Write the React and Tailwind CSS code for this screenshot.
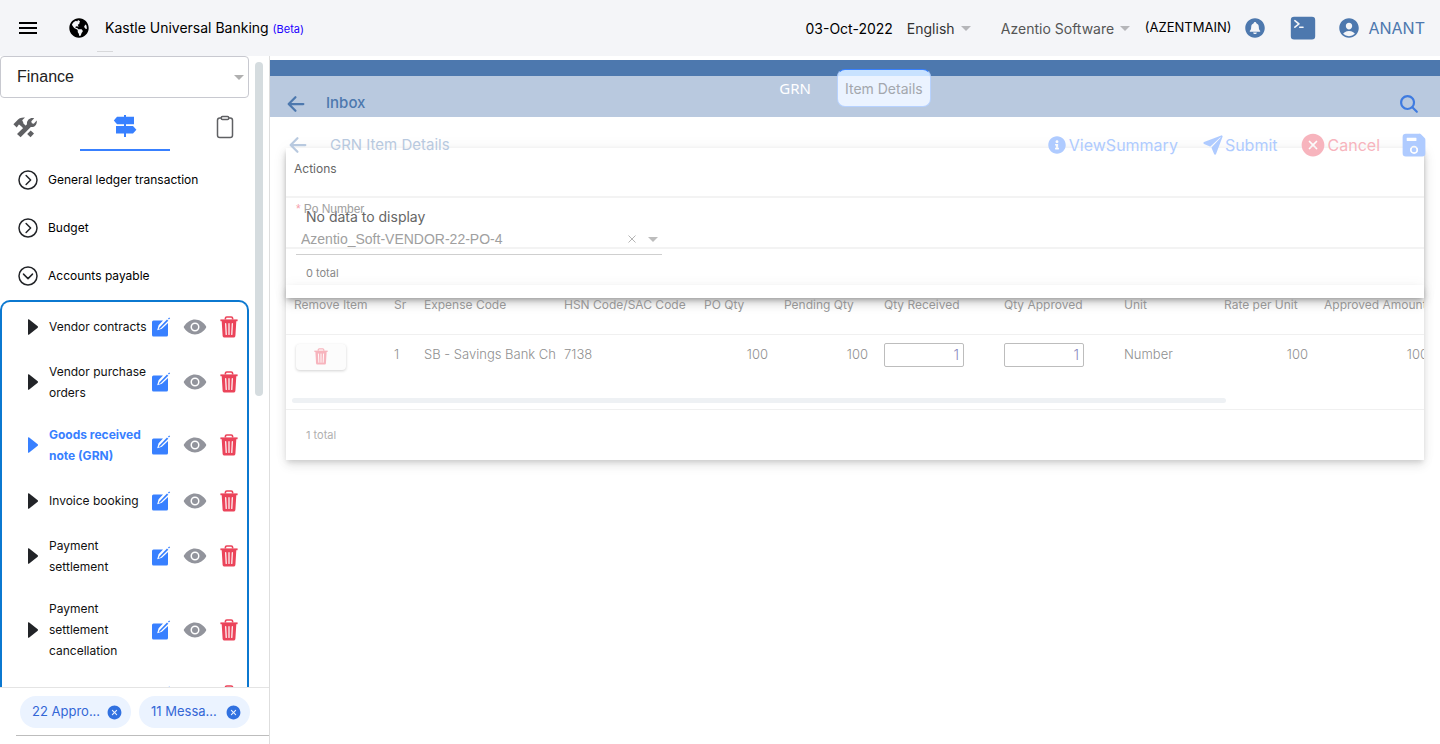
import { FaGlobeAmericas, FaInfoCircle } from 'react-icons/fa';
import { MdMenu } from 'react-icons/md';
import {
  IoArrowBack,
  IoChevronDownCircleOutline,
  IoChevronForwardCircleOutline,
  IoClipboardOutline,
  IoCloseCircle,
  IoEye,
  IoNotificationsCircle,
  IoPaperPlane,
  IoPersonCircle,
  IoSave,
  IoSearch,
  IoTerminal,
} from 'react-icons/io5';

const menuItems = [
  { label: 'Vendor contracts' },
  { label: 'Vendor purchase orders' },
  { label: 'Goods received note (GRN)', active: true },
  { label: 'Invoice booking' },
  { label: 'Payment settlement' },
  { label: 'Payment settlement cancellation' },
  { label: '' },
];

function Caret({ className }) {
  return (
    <svg viewBox="0 0 10 5" className={`pointer-events-none h-[5px] w-[10px] shrink-0 ${className}`} aria-hidden="true">
      <path d="M0 0h10L5 5z" fill="currentColor" />
    </svg>
  );
}

function ToolsIcon() {
  return (
    <svg viewBox="0 0 24 21" className="h-[21px] w-6" aria-hidden="true">
      <path d="M.4 7.200 3.600 3.900C5.500 1.500 8.500.3 12 .6L9.200 3.200l1.200 2.600L7.800 8.500 5.900 7.500 3.700 10.400z" fill="currentColor" />
      <path d="M17.700 13.400l3.300 3.200-3.500 3.600-3.300-3.300z" fill="currentColor" />
      <path d="M8.300 6.800l3.400 3.400" stroke="currentColor" strokeWidth="3.600" />
      <path
        d="M21.200 1.200 18.300 4.200l.5 2.100 2 .4 2.900-3.100c.7 3.600-2.100 7.200-5.900 6.400L7.600 20.200 4 16.900 14 7.300C13.300 3.200 17.200-.2 21.200 1.200z"
        fill="currentColor"
      />
    </svg>
  );
}

function SignpostIcon() {
  return (
    <svg viewBox="0 0 24 22" className="h-[22px] w-6" fill="currentColor" aria-hidden="true">
      <path d="M11 0h2v22h-2z" />
      <path d="M4 1.700h17v7.600H4L.8 5.500z" />
      <path d="M3 11h17l3.400 3.800L20 18.500H3z" />
    </svg>
  );
}

function EditIcon() {
  return (
    <svg viewBox="0 0 20 20" className="h-5 w-5" aria-hidden="true">
      <path
        d="M2.500 3.500H12L7.600 8.300l-1.400 4.900 4.700-1.400L17 6v12a1.500 1.500 0 0 1-1.500 1.500h-13A1.500 1.500 0 0 1 1 18V5a1.500 1.500 0 0 1 1.500-1.500z"
        fill="#3880ff"
      />
      <path d="M8.300 10.400 16 2.500l1.300 1.300-7.900 7.700-1.600.4z" fill="#3880ff" />
      <path d="m17 1.600 1.200-1.200.9.9-1.200 1.300z" fill="#3880ff" />
    </svg>
  );
}

function TrashIcon({ className }) {
  return (
    <svg viewBox="0 0 18 22" className={className} aria-hidden="true">
      <path d="M5.400 3.600V2.300C5.400 1.400 6 1 6.800 1h4.400c.8 0 1.400.4 1.400 1.300v1.300" fill="none" stroke="currentColor" strokeWidth="1.600" />
      <path d="M.4 3.400h17.200v1.800H.4z" fill="currentColor" />
      <path d="M1.700 5h14.600l-.9 14.700c-.1 1.100-.8 1.800-1.900 1.800h-9c-1.100 0-1.800-.7-1.900-1.800z" fill="currentColor" />
      <path d="M5.700 7.700l.5 10.800M9 7.700v10.800M12.300 7.700l-.5 10.800" stroke="#fff" strokeWidth="1.200" strokeLinecap="round" />
    </svg>
  );
}

function TopBar() {
  return (
    <header className="relative flex h-14 shrink-0 items-center bg-[#f4f5f8] pl-4 pr-[15px] text-black">
      <button aria-label="Menu" className="text-2xl">
        <MdMenu />
      </button>
      <FaGlobeAmericas className="ml-[29px] text-xl" />
      <h1 className="ml-4 text-[14px] leading-5">
        Kastle Universal Banking <span className="text-[11px] text-[#1a00ff]">(Beta)</span>
      </h1>
      <span className="absolute left-[97px] top-[51px] h-px w-4 bg-[#d7d8da]" />
      <div className="ml-auto flex items-center text-[14px]">
        <time>03-Oct-2022</time>
        <label className="ml-[14px] flex items-center text-[#333]">
          <select aria-label="Language" className="w-[54px] appearance-none bg-transparent outline-none">
            <option>English</option>
          </select>
          <Caret className="text-[#b5b6b9]" />
        </label>
        <label className="ml-[30px] flex items-center text-[#555]">
          <select aria-label="Company" className="w-[119px] appearance-none bg-transparent outline-none">
            <option>Azentio Software</option>
          </select>
          <Caret className="text-[#b5b6b9]" />
        </label>
        <span className="ml-[15px] text-[13px]">(AZENTMAIN)</span>
        <button aria-label="Notifications" className="ml-3 text-2xl text-[#4d78ae]">
          <IoNotificationsCircle />
        </button>
        <button aria-label="Console" className="ml-[23px] text-[26px] text-[#4d78ae]">
          <IoTerminal />
        </button>
        <button className="ml-[21px] flex items-center gap-[7px] text-[16px] text-[#4d78ae]">
          <IoPersonCircle className="text-2xl" />
          ANANT
        </button>
      </div>
    </header>
  );
}

function Section({ label, open }) {
  return (
    <button className="flex h-12 w-full items-center gap-2 pl-4 text-left text-[12px] text-black">
      {open ? (
        <IoChevronDownCircleOutline className="text-2xl text-[#222428]" />
      ) : (
        <IoChevronForwardCircleOutline className="text-2xl text-[#222428]" />
      )}
      {label}
    </button>
  );
}

function MenuRow({ label, active }) {
  return (
    <li className="flex min-h-12 items-center pb-[10px] pl-[26px] pt-[11px]">
      <svg viewBox="0 0 10 16" className={active ? 'h-4 w-[10px] text-[#3880ff]' : 'h-4 w-[10px] text-[#222428]'} aria-hidden="true">
        <path d="M0 .8v14.400c0 .6.7.7 1.200.3L9.700 8.700c.4-.4.4-1 0-1.400L1.200.5C.700.1 0 .2 0 .8z" fill="currentColor" />
      </svg>
      <a
        href="#"
        className={
          active
            ? 'ml-[11px] w-[102px] text-[12px] font-bold leading-[21px] text-[#3880ff]'
            : 'ml-[11px] w-[102px] text-[12px] leading-[21px] text-[#111]'
        }
      >
        {label}
      </a>
      <button aria-label="Edit">
        <EditIcon />
      </button>
      <button aria-label="View" className="ml-3 text-2xl text-[#92949c]">
        <IoEye />
      </button>
      <button aria-label="Delete" className="ml-[13px] text-[#eb445a]">
        <TrashIcon className="h-[22px] w-[18px]" />
      </button>
    </li>
  );
}

function Chip({ label }) {
  return (
    <span className="flex h-8 w-[111px] items-center justify-between rounded-full bg-[#ebf3ff] pl-3 pr-2 text-[13px] text-[#3367d6]">
      {label}
      <button aria-label="Dismiss" className="text-[17px] text-[#3171e0]">
        <IoCloseCircle />
      </button>
    </span>
  );
}

function Sidebar() {
  return (
    <aside className="flex w-[270px] shrink-0 flex-col border-r border-[#dedede]">
      <div className="flex min-h-0 flex-1 overflow-hidden">
        <div className="w-[249px]">
          <label className="flex h-[42px] items-center rounded border border-[#c8c9d0] pl-4 pr-1">
            <select
              aria-label="Module"
              className="flex-1 appearance-none bg-transparent font-['Liberation_Sans',sans-serif] text-[16px] text-[#222] outline-none"
            >
              <option>Finance</option>
            </select>
            <Caret className="text-[#b0b0b0]" />
          </label>
          <div className="flex h-[53px] overflow-hidden">
            <button aria-label="Tools" className="flex w-20 items-center pb-[3px] pl-[13px] pt-2 text-[#5f6063]">
              <ToolsIcon />
            </button>
            <button
              aria-label="Navigation"
              className="flex w-[90px] items-center justify-center border-b-2 border-[#3880ff] pt-[9px] text-[#3880ff]"
            >
              <span className="pb-1">
                <SignpostIcon />
              </span>
            </button>
            <button aria-label="Clipboard" className="flex flex-1 items-center pb-[3px] pl-[43px] pt-2 text-2xl text-[#5f6063]">
              <IoClipboardOutline />
            </button>
          </div>
          <nav className="pt-[5px]">
            <Section label="General ledger transaction" />
            <Section label="Budget" />
            <Section label="Accounts payable" open />
            <ul className="rounded-t-[10px] border-2 border-b-0 border-[#0b78d0] pb-12">
              {menuItems.map((item) => (
                <MenuRow key={item.label} {...item} />
              ))}
            </ul>
          </nav>
        </div>
        <div className="ml-[6px] mt-[6px] h-[334px] w-2 rounded bg-[#d5dcdf]" />
      </div>
      <div className="h-[57px] shrink-0 border-t border-[#e4e4e4] pt-2">
        <div className="flex gap-2 pl-5">
          <Chip label="22 Appro..." />
          <Chip label="11 Messa..." />
        </div>
        <div className="ml-4 mt-[7px] border-t border-[#bdbdbd]" />
      </div>
    </aside>
  );
}

function InboxLayer() {
  return (
    <div className="col-start-1 row-start-1 px-4 pt-[31px]">
      <section className="h-[150px] bg-white text-[#666] shadow-[0_3px_5px_-1px_rgba(0,0,0,0.28),0_6px_10px_0_rgba(0,0,0,0.13),0_1px_16px_0_rgba(0,0,0,0.05)]">
        <h3 className="h-[50px] border-b-2 border-[#f3f3f3] pl-2 pt-3 text-[12px] leading-[18px]">Actions</h3>
        <p className="h-[51px] border-b-2 border-[#f3f3f3] pl-5 pt-2 text-[14px] leading-[22px]">No data to display</p>
        <p className="pl-5 pt-[14px] text-[11px] leading-5 text-[#888]">0 total</p>
      </section>
    </div>
  );
}

function QtyInput({ label }) {
  return (
    <input
      aria-label={label}
      defaultValue="1"
      className="block h-6 w-20 rounded-xs border border-[#bdbdbd] bg-white px-1 text-right text-[14px] font-light text-[#8a8ac0] outline-none"
    />
  );
}

const columns = [
  { label: 'Remove Item', width: 'w-[100px]' },
  { label: 'Sr', width: 'w-[30px]' },
  { label: 'Expense Code', width: 'w-[140px]' },
  { label: 'HSN Code/SAC Code', width: 'w-[140px]' },
  { label: 'PO Qty', width: 'w-[80px]' },
  { label: 'Pending Qty', width: 'w-[100px]' },
  { label: 'Qty Received', width: 'w-[120px]' },
  { label: 'Qty Approved', width: 'w-[120px]' },
  { label: 'Unit', width: 'w-[100px]' },
  { label: 'Rate per Unit', width: 'w-[100px]' },
  { label: 'Approved Amount', width: 'w-[120px]' },
];

function ItemTable() {
  return (
    <section className="shadow-[0_3px_5px_-1px_rgba(0,0,0,0.12),0_6px_10px_0_rgba(0,0,0,0.08),0_1px_14px_0_rgba(0,0,0,0.05)]">
      <div className="overflow-hidden">
        <table className="w-[1150px] table-fixed border-collapse text-left">
          <thead>
            <tr className="h-[49px] border-b border-[#f0f0f0] align-top text-[12px] text-[#959595]">
              {columns.map((c) => (
                <th key={c.label} className={`${c.width} whitespace-nowrap pl-2 pt-[11px] font-normal leading-[18px]`}>
                  {c.label}
                </th>
              ))}
            </tr>
          </thead>
          <tbody>
            <tr className="h-16 align-top text-[13px] font-light leading-5 text-[#8f8f8f]">
              <td className="pl-[10px] pt-[9px]">
                <button
                  aria-label="Remove item"
                  className="flex h-[26px] w-[50px] items-center justify-center rounded bg-[#fcfcfc] text-[#f7b4bd] shadow-[0_1px_3px_rgba(0,0,0,0.18)]"
                >
                  <TrashIcon className="h-[17px] w-[14px]" />
                </button>
              </td>
              <td className="pl-2 pt-[9px]">1</td>
              <td className="overflow-hidden whitespace-nowrap pl-2 pt-[9px]">SB - Savings Bank Cheque Book</td>
              <td className="pl-2 pt-[9px]">7138</td>
              <td className="pr-2 pt-[9px] text-right">100</td>
              <td className="pr-2 pt-[9px] text-right">100</td>
              <td className="pl-2 pt-2">
                <QtyInput label="Quantity received" />
              </td>
              <td className="pl-2 pt-2">
                <QtyInput label="Quantity approved" />
              </td>
              <td className="pl-2 pt-[9px]">Number</td>
              <td className="pr-2 pt-[9px] text-right">100</td>
              <td className="pr-2 pt-[9px] text-right">100</td>
            </tr>
          </tbody>
        </table>
      </div>
      <div className="border-b border-[#f0f0f0] pb-[6px] pl-[6px]">
        <div className="h-[5px] w-[82.5%] rounded-full bg-[#eef1f4]" />
      </div>
      <p className="h-[50px] pl-5 pt-[15px] text-[11px] leading-5 text-[#b0b0b0]">1 total</p>
    </section>
  );
}

function GrnLayer() {
  return (
    <div className="z-10 col-start-1 row-start-1 min-w-0">
      <div className="flex h-14 items-center pl-4 pr-[13px] text-[16px] text-[#afcbff]">
        <button aria-label="Back" className="text-2xl text-[#b8c9df]">
          <IoArrowBack />
        </button>
        <h2 className="ml-5 text-[15px] text-[#b8c9df]">GRN Item Details</h2>
        <div className="ml-auto flex items-center">
          <button className="flex items-center gap-[3px]">
            <FaInfoCircle className="text-[18px]" />
            ViewSummary
          </button>
          <button className="ml-6 flex items-center gap-px">
            <IoPaperPlane className="text-[22px]" />
            Submit
          </button>
          <button className="ml-[21px] flex items-center gap-px text-[#f7b4bd]">
            <IoCloseCircle className="text-[28px]" />
            Cancel
          </button>
          <button aria-label="Save" className="ml-[21px] text-[26px]">
            <IoSave />
          </button>
        </div>
      </div>
      <div className="ml-[26px] mt-[27px] h-[55px] w-[366px] border-b border-[#cfcfcf] font-['Liberation_Sans',sans-serif] text-[#a0a0a0]">
        <label htmlFor="po" className="block text-[12px] leading-[18px]">
          <span className="mr-[3px] text-[#f7a0ac]">*</span>
          Po Number
        </label>
        <div className="mt-3 flex items-center pl-[5px] pr-1">
          <input id="po" defaultValue="Azentio_Soft-VENDOR-22-PO-4" className="min-w-0 flex-1 bg-transparent text-[14px] leading-[18px] outline-none" />
          <button aria-label="Clear" className="mr-3 text-[#b5b5b5]">
            <svg viewBox="0 0 8 8" className="h-2 w-2" aria-hidden="true">
              <path d="M.5.5l7 7m0-7l-7 7" stroke="currentColor" fill="none" />
            </svg>
          </button>
          <Caret className="text-[#bdbdbd]" />
        </div>
      </div>
      <div className="mt-[30px] px-4">
        <ItemTable />
      </div>
    </div>
  );
}

function Main() {
  return (
    <main className="min-w-0 flex-1 overflow-hidden pt-1">
      <div className="relative border-t-[16px] border-[#4d78ae] bg-[#b9c9df]">
        <div className="flex h-[41px] items-center pl-[14px] pr-5 pt-[14px] text-[#4d78ae]">
          <button aria-label="Back to inbox" className="text-2xl">
            <IoArrowBack />
          </button>
          <h2 className="ml-[18px] text-[15px] font-medium">Inbox</h2>
          <button aria-label="Search" className="ml-auto text-[22px] text-[#3f7be0]">
            <IoSearch />
          </button>
        </div>
        <div className="absolute inset-x-0 -top-[7px] flex items-center justify-center gap-[26px]">
          <button className="font-['Noto_Sans',sans-serif] text-[15px] text-white">GRN</button>
          <button className="h-[38px] rounded-lg border border-t-[#3880ff] border-x-[#b7d2ff] border-b-[#b7d2ff] bg-[linear-gradient(#c8e2ff_6px,#ebf3ff_6px)] px-[7px] text-[14px] text-[#a3a7ad]">
            Item Details
          </button>
        </div>
      </div>
      <div className="grid grid-cols-1">
        <InboxLayer />
        <GrnLayer />
      </div>
    </main>
  );
}

export default function App() {
  return (
    <div className="flex h-screen flex-col overflow-hidden bg-white font-['Inter',sans-serif]">
      <TopBar />
      <div className="flex min-h-0 flex-1">
        <Sidebar />
        <Main />
      </div>
    </div>
  );
}
